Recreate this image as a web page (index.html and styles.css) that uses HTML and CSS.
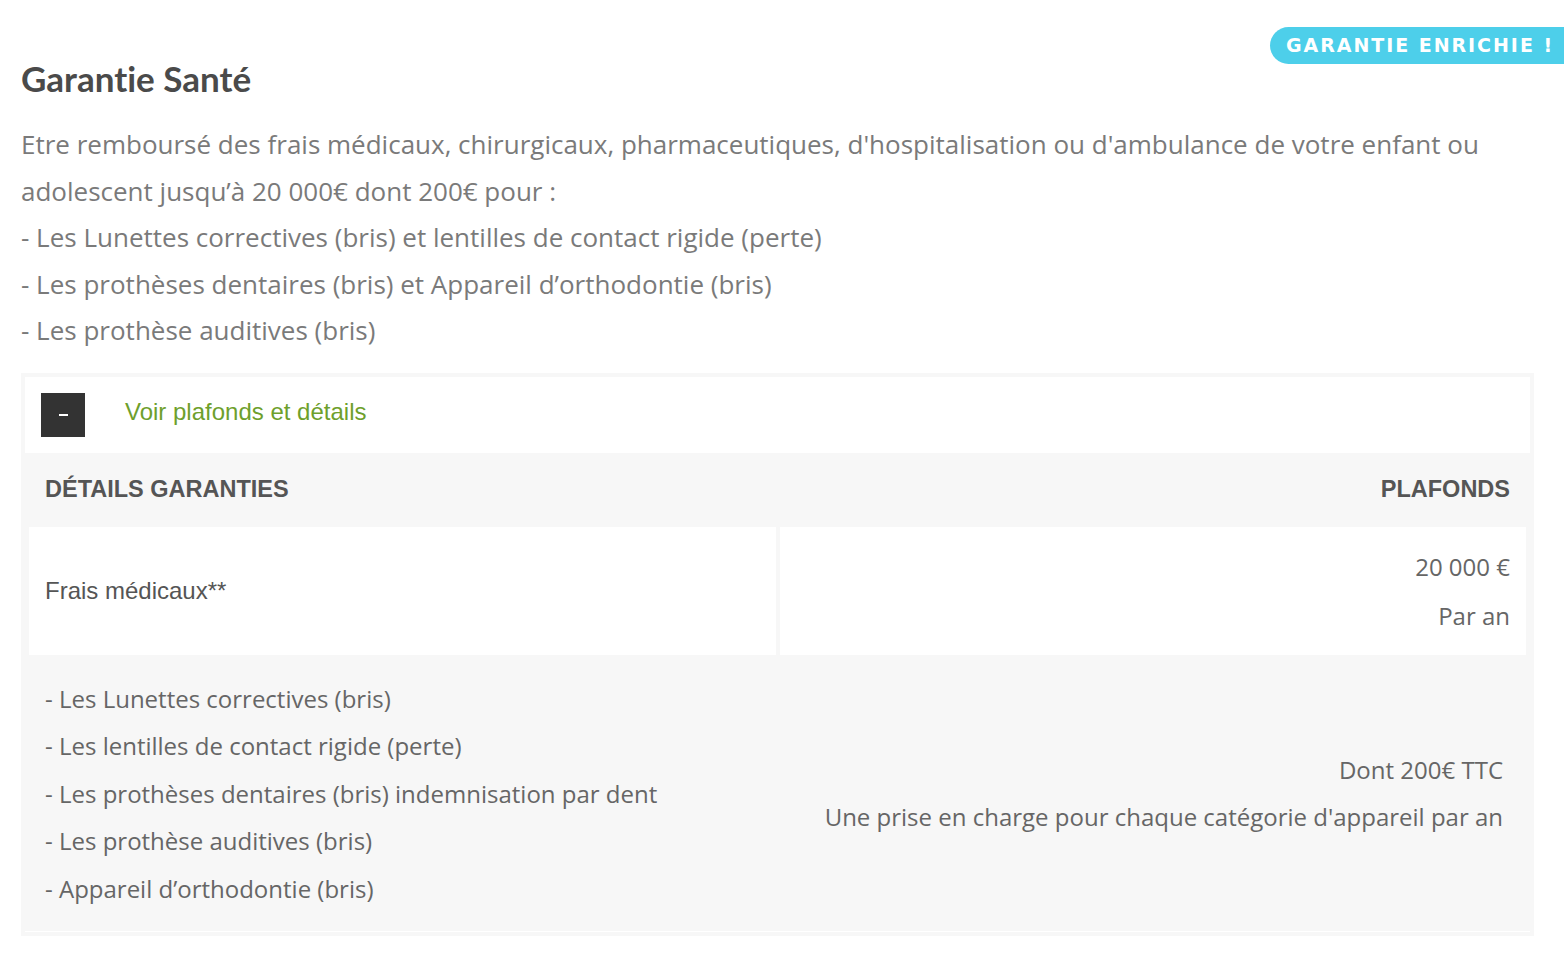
FILE: index.html
```html
<!DOCTYPE html>
<html lang="fr">
<head>
<meta charset="utf-8">
<title>Garantie Santé</title>
<link rel="stylesheet" href="styles.css">
</head>
<body>
<div class="page">
  <div class="badge">GARANTIE ENRICHIE !</div>
  <h1 class="title">Garantie Santé</h1>
  <p class="intro">Etre remboursé des frais médicaux, chirurgicaux, pharmaceutiques, d'hospitalisation ou d'ambulance de votre enfant ou adolescent jusqu’à 20 000€ dont 200€ pour :<br>- Les Lunettes correctives (bris) et lentilles de contact rigide (perte)<br>- Les prothèses dentaires (bris) et Appareil d’orthodontie (bris)<br>- Les prothèse auditives (bris)</p>
  <div class="details">
    <div class="toggle">
      <span class="toggle-btn"><span class="dash"></span></span>
      <span class="toggle-label">Voir plafonds et détails</span>
    </div>
    <div class="table">
      <div class="th th-left">DÉTAILS GARANTIES</div>
      <div class="th th-right">PLAFONDS</div>
      <div class="cell cell-white cell-label">Frais médicaux**</div>
      <div class="cell cell-white cell-amount"><div>20 000 €</div><div>Par an</div></div>
      <div class="cell cell-list">
        <div>- Les Lunettes correctives (bris)</div>
        <div>- Les lentilles de contact rigide (perte)</div>
        <div>- Les prothèses dentaires (bris) indemnisation par dent</div>
        <div>- Les prothèse auditives (bris)</div>
        <div>- Appareil d’orthodontie (bris)</div>
      </div>
      <div class="cell cell-note">
        <div>Dont 200€ TTC</div>
        <div>Une prise en charge pour chaque catégorie d'appareil par an</div>
      </div>
    </div>
  </div>
</div>
</body>
</html>
```
FILE: styles.css
```css
html, body {
  margin: 0;
  padding: 0;
  background: #ffffff;
  overflow: hidden;
}
body {
  font-family: "Open Sans", "Liberation Sans", sans-serif;
}
.page {
  position: relative;
  padding: 58px 30px 0 21px;
}
.badge {
  position: absolute;
  top: 27px;
  right: 0;
  height: 37px;
  line-height: 37px;
  padding: 0 10px 0 16px;
  background: #4dcfea;
  color: #ffffff;
  font-family: "DejaVu Sans", sans-serif;
  font-weight: 700;
  font-size: 19px;
  letter-spacing: 1.95px;
  border-radius: 19px 0 0 19px;
}
.title {
  margin: 0;
  font-family: "Lato", "Liberation Sans", sans-serif;
  font-weight: 700;
  font-size: 35px;
  line-height: 40px;
  letter-spacing: 0;
  font-variant-ligatures: none;
  color: #4a4a4a;
}
.intro {
  margin: 23px 0 0;
  font-size: 26px;
  line-height: 46.5px;
  color: #7a7a7a;
}
.details {
  margin-top: 19px;
  background: #f7f7f7;
  padding: 4px;
}
.toggle {
  background: #ffffff;
  padding: 16px;
  display: flex;
  align-items: center;
  gap: 40px;
}
.toggle-btn {
  width: 44px;
  height: 44px;
  background: #333333;
  display: flex;
  align-items: center;
  justify-content: center;
}
.dash {
  width: 9px;
  height: 2px;
  background: #ffffff;
}
.toggle-label {
  font-family: "Liberation Sans", Arial, sans-serif;
  font-size: 24px;
  color: #6e9f2c;
  padding-bottom: 5px;
}
.table {
  display: grid;
  grid-template-columns: 1fr 1fr;
  gap: 4px;
  padding: 4px 4px 3px;
  border-bottom: 1px solid #ffffff;
}
.th {
  font-family: "Liberation Sans", Arial, sans-serif;
  font-weight: 700;
  font-size: 23.5px;
  line-height: 64px;
  padding: 0 16px 2px;
  color: #555555;
}
.th-right {
  text-align: right;
}
.cell {
  padding: 15px 16px;
}
.cell-white {
  background: #ffffff;
}
.cell-label {
  display: flex;
  align-items: center;
  font-family: "Liberation Sans", Arial, sans-serif;
  font-size: 24px;
  color: #555555;
}
.cell-amount {
  text-align: right;
  font-size: 24px;
  line-height: 49px;
  color: #666666;
}
.cell-list {
  padding: 16px;
  font-size: 24px;
  line-height: 47.5px;
  color: #666666;
}
.cell-note {
  padding: 16px 23px 16px 16px;
  display: flex;
  flex-direction: column;
  justify-content: center;
  align-items: flex-end;
  text-align: right;
  font-size: 24px;
  line-height: 47px;
  color: #666666;
}
```
